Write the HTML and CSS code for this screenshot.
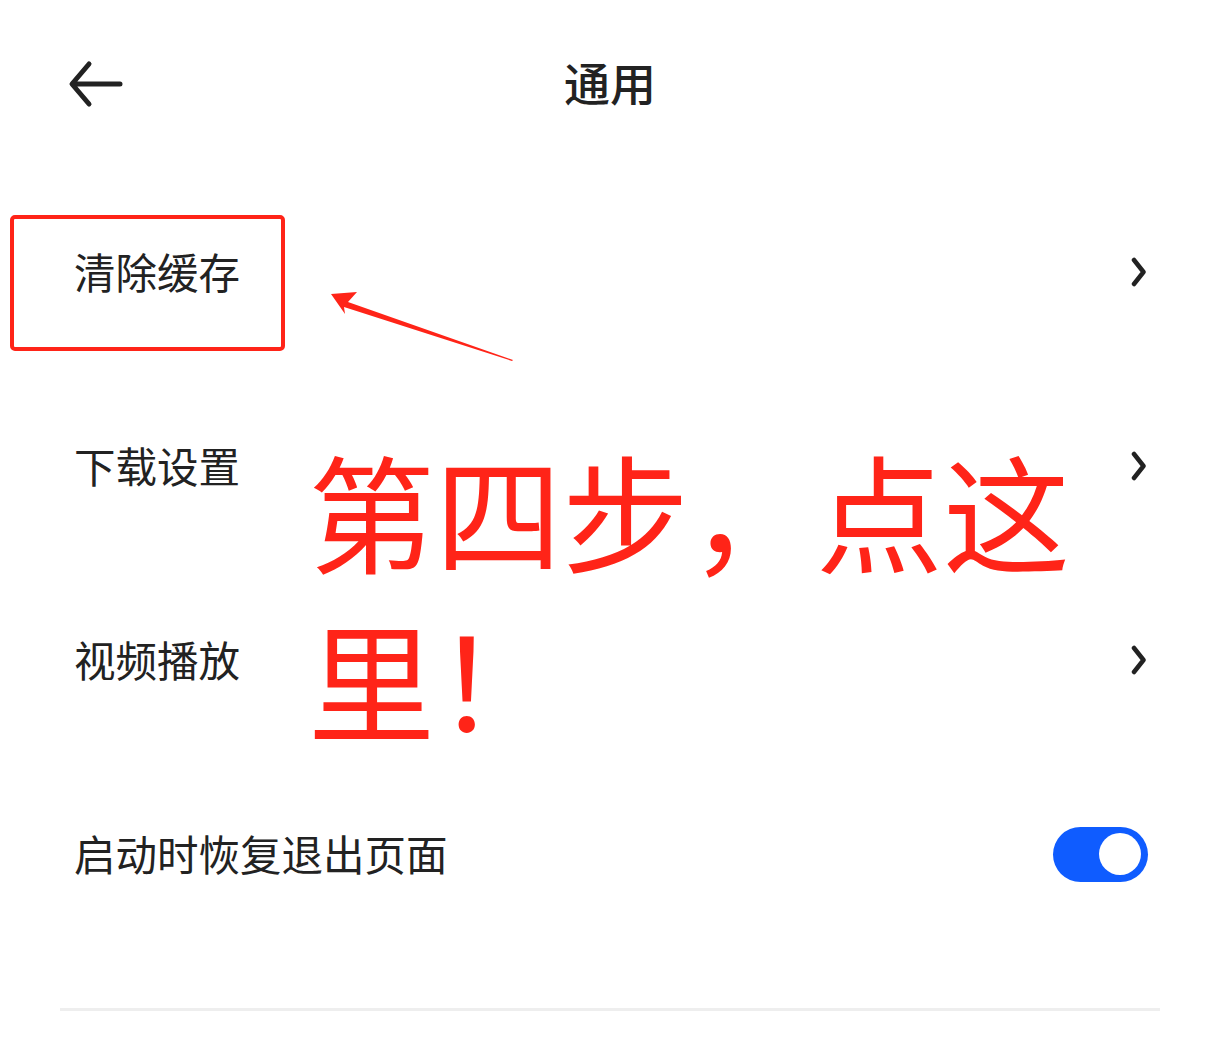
FILE: index.html
```html
<!DOCTYPE html>
<html lang="zh-CN">
<head>
    <meta charset="UTF-8">
    <meta name="viewport" content="width=device-width, initial-scale=1.0">
    <title>通用</title>
    <link rel="stylesheet" href="styles.css">
</head>
<body>
    <header class="top-bar">
        <button class="back-btn" aria-label="返回">
            <svg width="60" height="50" viewBox="0 0 60 50">
                <path d="M52 25 H6 M21 5 L4 25 L21 45" fill="none" stroke="#222" stroke-width="5" stroke-linecap="round" stroke-linejoin="round"/>
            </svg>
        </button>
        <h1>通用</h1>
    </header>

    <main class="settings">
        <div class="row">
            <span class="label">清除缓存</span>
            <svg class="chevron" width="16" height="32" viewBox="0 0 16 32"><path d="M3 4 L12.5 16 L3 28" fill="none" stroke="#222" stroke-width="4.5" stroke-linecap="round" stroke-linejoin="round"/></svg>
        </div>
        <div class="row">
            <span class="label">下载设置</span>
            <svg class="chevron" width="16" height="32" viewBox="0 0 16 32"><path d="M3 4 L12.5 16 L3 28" fill="none" stroke="#222" stroke-width="4.5" stroke-linecap="round" stroke-linejoin="round"/></svg>
        </div>
        <div class="row">
            <span class="label">视频播放</span>
            <svg class="chevron" width="16" height="32" viewBox="0 0 16 32"><path d="M3 4 L12.5 16 L3 28" fill="none" stroke="#222" stroke-width="4.5" stroke-linecap="round" stroke-linejoin="round"/></svg>
        </div>
        <div class="row">
            <span class="label">启动时恢复退出页面</span>
            <span class="toggle on"><span class="knob"></span></span>
        </div>
        <hr class="divider">
    </main>

    <!-- tutorial annotations drawn over the screenshot -->
    <div class="mark-box"></div>
    <svg class="mark-arrow" width="200" height="80" viewBox="0 0 200 80">
        <polygon points="0,0 26,-2 17,8 182,66 181,67 13,13 14,20" fill="#ff2418"/>
    </svg>
    <p class="mark-text">第四步，点这里！</p>
</body>
</html>
```

FILE: styles.css
```css
body {
    margin: 0;
    background: #fff;
    font-family: "Noto Sans CJK SC", "Noto Sans", sans-serif;
    color: #222;
}

.top-bar {
    position: relative;
    height: 168px;
    padding-bottom: 6px;
    box-sizing: border-box;
    display: flex;
    align-items: center;
    justify-content: center;
}

.top-bar h1 {
    margin: 0;
    font-size: 46px;
    font-weight: 500;
    color: #222;
}

.back-btn {
    position: absolute;
    left: 68px;
    top: 59px;
    padding: 0;
    border: none;
    background: none;
}

.back-btn svg {
    display: block;
}

.settings {
    padding-top: 7px;
}

.row {
    height: 194px;
    display: flex;
    align-items: center;
    justify-content: space-between;
    padding: 0 72px 0 74px;
}

.label {
    font-size: 41.5px;
    line-height: 1;
}

.chevron {
    display: block;
    margin-right: 1px;
}

.toggle {
    width: 95px;
    height: 55px;
    border-radius: 28px;
    background: #0f5cff;
    display: flex;
    align-items: center;
    justify-content: flex-end;
    padding: 0 7px;
    box-sizing: border-box;
}

.knob {
    width: 42px;
    height: 42px;
    border-radius: 50%;
    background: #fff;
}

.divider {
    margin: 57px 60px 0;
    border: none;
    height: 3px;
    background: #eee;
}

.mark-box {
    position: absolute;
    left: 10px;
    top: 215px;
    width: 275px;
    height: 136px;
    border: 4px solid #ff2418;
    border-radius: 5px;
    box-sizing: border-box;
}

.mark-arrow {
    position: absolute;
    left: 331px;
    top: 294px;
    overflow: visible;
}

.mark-text {
    position: absolute;
    left: 308px;
    top: 425px;
    width: 800px;
    margin: 0;
    font-size: 127px;
    line-height: 168px;
    color: #ff2418;
    font-family: "Noto Sans CJK SC", sans-serif;
}
```
